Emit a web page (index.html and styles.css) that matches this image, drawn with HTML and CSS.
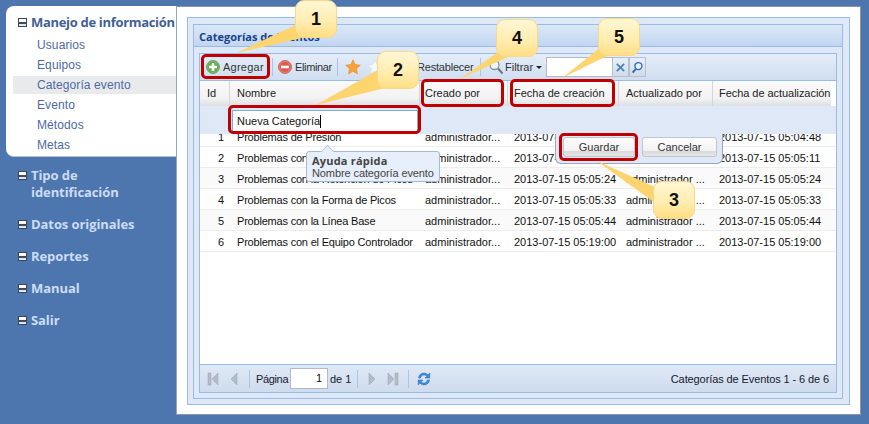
FILE: index.html
```html
<!DOCTYPE html>
<html lang="es">
<head>
<meta charset="utf-8">
<title>Categorías de Eventos</title>
<link rel="stylesheet" href="styles.css">
</head>
<body>
<div class="page">
  <nav class="sidebar">
    <div class="nav-open">
      <div class="nav-head"><span class="minus"></span><span>Manejo de información</span></div>
      <ul class="nav-list">
        <li>Usuarios</li>
        <li>Equipos</li>
        <li class="selected">Categoría evento</li>
        <li>Evento</li>
        <li>Métodos</li>
        <li>Metas</li>
      </ul>
    </div>
    <div class="nav-closed">
      <div class="nav-item two"><span class="minus"></span><span>Tipo de<br>identificación</span></div>
      <div class="nav-item"><span class="minus"></span><span>Datos originales</span></div>
      <div class="nav-item"><span class="minus"></span><span>Reportes</span></div>
      <div class="nav-item"><span class="minus"></span><span>Manual</span></div>
      <div class="nav-item"><span class="minus"></span><span>Salir</span></div>
    </div>
  </nav>
  <main class="content">
    <div class="frame">
      <section class="panel">
        <header class="panel-title">Categorías de Eventos</header>
        <div class="panel-body">
          <div class="grid">
            <div class="toolbar">
              <span class="tbtn add">
                <svg class="ico" viewBox="0 0 14 14"><circle cx="7" cy="7" r="6.5" fill="#6cbb5a" stroke="#7d9d78"/><circle cx="7" cy="7" r="5" fill="#5cb04a"/><path d="M5.7 3h2.6v2.7H11v2.6H8.300V11H5.700V8.300H3V5.700h2.700z" fill="#fff"/></svg>
                <span>Agregar</span>
              </span>
              <span class="sep"></span>
              <span class="tbtn del">
                <svg class="ico" viewBox="0 0 14 14"><circle cx="7" cy="7" r="6.500" fill="#ee7b70" stroke="#b86d68"/><circle cx="7" cy="7" r="5" fill="#e2574c"/><rect x="3" y="5.700" width="8" height="2.600" fill="#fff"/></svg>
                <span>Eliminar</span>
              </span>
              <span class="sep"></span>
              <svg class="star" viewBox="0 0 16 16"><path d="M8 .8l2.200 4.800 5.100.6-3.800 3.500 1 5.200L8 12.300l-4.500 2.600 1-5.200L.7 6.200l5.100-.6z" fill="#f9a13a" stroke="#e58a2a" stroke-width=".6"/></svg>
              <svg class="star two" viewBox="0 0 16 16"><path d="M8 .8l2.200 4.800 5.100.6-3.800 3.500 1 5.200L8 12.300l-4.500 2.600 1-5.200L.7 6.200l5.100-.6z" fill="#f7f8fb" stroke="#d5d9e0" stroke-width=".6"/></svg>
              <span class="reset">Restablecer</span>
              <span class="sep"></span>
              <svg class="lens" viewBox="0 0 16 16"><circle cx="6.500" cy="6" r="4.500" fill="#eef4fb" stroke="#8a94a2" stroke-width="1.300"/><path d="M10 9.500l4.500 5" stroke="#6d7682" stroke-width="2"/></svg>
              <span class="filter">Filtrar</span>
              <span class="caret"></span>
              <span class="search">
                <span class="search-input"></span>
                <span class="sbtn"><svg viewBox="0 0 12 12" width="11" height="11"><path d="M2 2l8 8M10 2l-8 8" stroke="#4d83b8" stroke-width="2"/></svg></span>
                <span class="sbtn"><svg viewBox="0 0 14 14" width="13" height="13"><circle cx="8" cy="5.500" r="3.800" fill="#e4f0fa" stroke="#2f6fb0" stroke-width="1.500"/><path d="M5.300 8.500L1.800 12.500" stroke="#2f6fb0" stroke-width="2.200"/></svg></span>
              </span>
            </div>
            <div class="cols">
              <div class="col c-id">Id</div>
              <div class="col c-name">Nombre</div>
              <div class="col c-by">Creado por</div>
              <div class="col c-date">Fecha de creación</div>
              <div class="col c-up">Actualizado por</div>
              <div class="col c-last">Fecha de actualización</div>
            </div>
            <div class="rows">
              <div class="row"><div class="c-id num">1</div><div class="c-name">Problemas de Presión</div><div class="c-by">administrador...</div><div class="c-date">2013-07-15 05:04:48</div><div class="c-up">administrador ...</div><div class="c-last">2013-07-15 05:04:48</div></div>
              <div class="row"><div class="c-id num">2</div><div class="c-name">Problemas con la Sensibilidad</div><div class="c-by">administrador...</div><div class="c-date">2013-07-15 05:05:11</div><div class="c-up">administrador ...</div><div class="c-last">2013-07-15 05:05:11</div></div>
              <div class="row alt"><div class="c-id num">3</div><div class="c-name">Problemas con la Retención de Picos</div><div class="c-by">administrador...</div><div class="c-date">2013-07-15 05:05:24</div><div class="c-up">administrador ...</div><div class="c-last">2013-07-15 05:05:24</div></div>
              <div class="row"><div class="c-id num">4</div><div class="c-name">Problemas con la Forma de Picos</div><div class="c-by">administrador...</div><div class="c-date">2013-07-15 05:05:33</div><div class="c-up">administrador ...</div><div class="c-last">2013-07-15 05:05:33</div></div>
              <div class="row alt"><div class="c-id num">5</div><div class="c-name">Problemas con la Línea Base</div><div class="c-by">administrador...</div><div class="c-date">2013-07-15 05:05:44</div><div class="c-up">administrador ...</div><div class="c-last">2013-07-15 05:05:44</div></div>
              <div class="row"><div class="c-id num">6</div><div class="c-name">Problemas con el Equipo Controlador</div><div class="c-by">administrador...</div><div class="c-date">2013-07-15 05:19:00</div><div class="c-up">administrador ...</div><div class="c-last">2013-07-15 05:19:00</div></div>
            </div>
            <div class="pager">
              <svg class="pg" viewBox="0 0 12 14"><rect x="1" y="1" width="3" height="12" fill="#b4bcc6" stroke="#99a2ad" stroke-width=".5"/><path d="M11 1v12L5 7z" fill="#b4bcc6" stroke="#99a2ad" stroke-width=".5"/></svg>
              <svg class="pg" viewBox="0 0 12 14"><path d="M9 1v12L3 7z" fill="#b4bcc6" stroke="#99a2ad" stroke-width=".5"/></svg>
              <span class="sep"></span>
              <span class="pg-label">Página</span>
              <span class="pg-input">1</span>
              <span class="pg-of">de 1</span>
              <span class="sep"></span>
              <svg class="pg next" viewBox="0 0 12 14"><path d="M3 1v12L9 7z" fill="#b4bcc6" stroke="#99a2ad" stroke-width=".5"/></svg>
              <svg class="pg" viewBox="0 0 12 14"><path d="M1 1v12L7 7z" fill="#b4bcc6" stroke="#99a2ad" stroke-width=".5"/><rect x="8" y="1" width="3" height="12" fill="#b4bcc6" stroke="#99a2ad" stroke-width=".5"/></svg>
              <span class="sep"></span>
              <svg class="refresh" viewBox="0 0 16 16"><path d="M2.500 7A5.500 5.500 0 0 1 12 3.800L13.800 2v5H9l1.800-1.800A3.600 3.600 0 0 0 4.500 7z" fill="#3d8fe0" stroke="#1f66b5" stroke-width=".5"/><path d="M13.500 9A5.500 5.500 0 0 1 4 12.200L2.200 14V9H7l-1.800 1.800A3.600 3.600 0 0 0 11.500 9z" fill="#3d8fe0" stroke="#1f66b5" stroke-width=".5"/></svg>
              <span class="pg-info">Categorías de Eventos 1 - 6 de 6</span>
            </div>
            <div class="editor"><div class="edit-field">Nueva Categoría<span class="cursor"></span></div></div>
            <div class="edit-actions"><span class="btn">Guardar</span><span class="btn">Cancelar</span></div>
            <div class="tip">
              <strong>Ayuda rápida</strong>
              <span>Nombre categoría evento</span>
            </div>
          </div>
        </div>
      </section>
    </div>
  </main>
</div>
<svg class="tails" viewBox="0 0 869 424" aria-hidden="true">
  <path d="M236 53L298 24L306 37z"/>
  <path d="M316 105L378 70L385 88z"/>
  <path d="M460 79L501 50L510 56z"/>
  <path d="M562 78L601 47L611 54z"/>
  <path d="M597 161L655 187L655 203z"/>
</svg>
<div class="mark m1"></div>
<div class="mark m2"></div>
<div class="mark m3"></div>
<div class="mark m4"></div>
<div class="mark m5"></div>
<div class="bubble b1">1</div>
<div class="bubble b2">2</div>
<div class="bubble b3">3</div>
<div class="bubble b4">4</div>
<div class="bubble b5">5</div>
</body>
</html>
```
FILE: styles.css
```css
* { box-sizing: border-box; }
html, body { margin: 0; padding: 0; }
body {
  width: 869px;
  height: 424px;
  overflow: hidden;
  position: relative;
  background: #4e76ae;
  font-family: "Liberation Sans", Arial, sans-serif;
  font-size: 11px;
  color: #1c1c1c;
}
.page { display: flex; padding: 6px 8px 9px 6px; height: 424px; }
.sidebar { width: 170px; flex: none; }
.nav-open {
  height: 151px;
  background: #fff;
  border-radius: 8px 0 0 8px;
  padding: 7px 0 0 7px;
  border-bottom: 1px solid #b5c3d8;
}
.nav-head, .nav-item {
  display: flex;
  gap: 4px;
  font-family: "Open Sans", sans-serif;
  font-weight: 700;
  font-size: 13px;
  line-height: 18px;
  letter-spacing: -.08px;
  white-space: nowrap;
}
.nav-head { color: #3f5f95; padding-left: 5px; letter-spacing: -.32px; }
.minus {
  flex: none;
  width: 9px;
  height: 9px;
  margin-top: 5px;
  background: linear-gradient(#fff 0 3px, #3f4a5c 3px 5px, #dfe6ef 5px);
  border: 1px solid #3c4757;
}
.nav-list { list-style: none; margin: 4px 0 0; padding: 0; }
.nav-list li {
  height: 20px;
  line-height: 20px;
  padding: 0 0 0 24px;
  font-size: 12px;
  letter-spacing: .1px;
  color: #4d6aa6;
}
.nav-list .selected { background: linear-gradient(transparent 1px, #e9eaec 1px 19px, transparent 19px); }
.nav-closed { padding: 10px 0 0 12px; }
.nav-item { color: #cbdcf5; height: 32px; }
.nav-item.two { height: 48px; line-height: 17px; }
.nav-item.two .minus { margin-top: 4px; }

.content {
  flex: 1;
  background: #fff;
  border: 1px solid #8b97a8;
  border-left-color: #9aa3ae;
  padding: 10px 10px 9px 10px;
}
.frame {
  height: 100%;
  background: #dfe8f6;
  border: 1px solid #99bbe8;
  padding: 6px 6px 5px 5px;
}
.panel {
  height: 100%;
  border: 1px solid #99bbe8;
  background: #dfe8f6;
  display: flex;
  flex-direction: column;
}
.panel-title {
  height: 22px;
  flex: none;
  padding: 4px 0 0 5px;
  line-height: 15px;
  font-family: "Open Sans", sans-serif;
  font-weight: 700;
  font-size: 11px;
  color: #15428b;
  background: linear-gradient(#dae7f6, #cddef3 60%, #c2d6f0);
  border-bottom: 1px solid #99bbe8;
}
.panel-body { flex: 1; padding: 6px 5px 5px 5px; min-height: 0; }
.grid {
  height: 100%;
  position: relative;
  background: #fff;
  border: 1px solid #99bbe8;
  display: flex;
  flex-direction: column;
}
.toolbar {
  height: 27px;
  flex: none;
  display: flex;
  align-items: center;
  padding-left: 6px;
  background: linear-gradient(#e4edf9, #d0def0);
  border-bottom: 1px solid #99bbe8;
  color: #333;
}
.tbtn { display: flex; align-items: center; gap: 3px; flex: none; }
.tbtn.add { letter-spacing: .25px; width: 58px; }
.tbtn.del { letter-spacing: -.35px; width: 54px; }
.ico { width: 14px; height: 14px; flex: none; }
.sep { width: 1px; height: 18px; background: #a9c4e8; flex: none; }
.add + .sep { margin: 0 5px 0 8px; }
.del + .sep { margin: 0 7px 0 5px; }
.star { width: 16px; height: 16px; flex: none; }
.star.two { margin-left: 6px; }
.reset { margin-left: 34px; letter-spacing: -.2px; width: 56px; flex: none; }
.reset + .sep { margin: 0 7px; }
.lens { width: 16px; height: 16px; flex: none; }
.filter { margin-left: 1px; width: 29px; flex: none; }
.caret {
  margin: 1px 4px 0 2px;
  border: 3px solid transparent;
  border-top-color: #222;
  border-bottom-width: 0;
}
.search { display: flex; height: 20px; }
.search-input { width: 66px; background: #fff; border: 1px solid #b5b8c8; border-right: 0; }
.sbtn {
  width: 17px;
  display: flex;
  align-items: center;
  justify-content: center;
  border: 1px solid #b5bfd0;
  background: linear-gradient(#e8eff9, #cfdcec);
}
.cols {
  height: 25px;
  flex: none;
  display: flex;
  background: linear-gradient(#fafafa, #f2f2f2 70%, #dcdfe4);
  margin-right: 5px;
}
.col {
  line-height: 25px;
  color: #222;
  border-right: 1px solid #d3d6db;
  white-space: nowrap;
  overflow: hidden;
}
.col.c-last { border-right: 0; letter-spacing: -.05px; }
.c-id { width: 30px; padding-left: 7px; flex: none; }
.c-name { width: 190px; padding-left: 7px; flex: none; }
.c-by { width: 88px; padding-left: 5px; flex: none; }
.c-date { width: 111px; padding-left: 6px; flex: none; }
.c-up { width: 94px; padding-left: 7px; flex: none; }
.c-last { width: 118px; padding-left: 6px; flex: none; }
.rows { flex: 1; padding-top: 20px; min-height: 0; }
.row {
  height: 21px;
  display: flex;
  line-height: 22px;
  border-bottom: 1px solid #ededed;
  color: #111;
  white-space: nowrap;
}
.row .c-name { letter-spacing: -.2px; }
.row.alt { background: #fafafa; }
.row .num { padding: 0 6px 0 0; text-align: right; letter-spacing: 0; }
.pager {
  height: 28px;
  flex: none;
  display: flex;
  align-items: center;
  padding-left: 7px;
  background: linear-gradient(#dfe8f6, #cfdcee);
  border-top: 1px solid #99bbe8;
  color: #15202e;
  line-height: 15px;
  white-space: nowrap;
}
.pg { width: 12px; height: 14px; margin-right: 7px; flex: none; }
.pg + .pg { margin-left: 2px; }
.pg.next { margin-left: 2px; }
.pager .sep { margin: 0 6px 0 2px; }
.pg-label { width: 34px; flex: none; letter-spacing: -.35px; padding-top: 1px; }
.pg-input {
  width: 38px;
  height: 21px;
  line-height: 19px;
  background: #fff;
  border: 1px solid #b5b8c8;
  text-align: right;
  padding-right: 5px;
  color: #111;
  flex: none;
}
.pg-of { margin: 0 4px 0 2px; width: 21px; flex: none; padding-top: 1px; }
.refresh { width: 16px; height: 16px; margin-left: 1px; flex: none; }
.pg-info { margin-left: auto; margin-right: 7px; letter-spacing: -.1px; padding-top: 1px; }
.editor {
  position: absolute;
  left: 0;
  right: 0;
  top: 52px;
  height: 28px;
  background: #dfe8f6;
  padding: 4px 0 0 32px;
}
.edit-field {
  width: 186px;
  height: 22px;
  line-height: 20px;
  padding-left: 4px;
  background: #fff;
  border: 1px solid #7eadd9;
  color: #111;
}
.cursor { display: inline-block; width: 1px; height: 13px; background: #000; vertical-align: -3px; }
.edit-actions {
  position: absolute;
  left: 355px;
  top: 80px;
  width: 168px;
  height: 30px;
  display: flex;
  gap: 7px;
  padding: 3px 0 0 7px;
  background: #dfe8f6;
  border: 1px solid #99a8bd;
  border-top: 0;
  border-radius: 0 0 6px 6px;
}
.btn {
  height: 20px;
  width: 72px;
  line-height: 18px;
  text-align: center;
  color: #333;
  border: 1px solid #c0c6ce;
  border-radius: 3px;
  background: linear-gradient(#fdfdfd, #f2f2f2 70%, #d8d8d8 70%, #e6e6e6);
}
.btn + .btn { width: 75px; }
.tip {
  position: absolute;
  left: 106px;
  top: 97px;
  width: 134px;
  height: 31px;
  display: flex;
  flex-direction: column;
  padding: 2px 0 0 5px;
  line-height: 13px;
  background: #e6effa;
  border: 1px solid #a3bad9;
  border-radius: 3px;
  color: #444;
}
.tip strong { font-family: "Open Sans", sans-serif; font-size: 11px; color: #444; letter-spacing: .2px; }
.tip span { letter-spacing: -.1px; }
.tip::before {
  content: "";
  position: absolute;
  left: 14px;
  top: -7px;
  width: 12px;
  height: 12px;
  background: #e6effa;
  border: 1px solid #a3bad9;
  border-right: 0;
  border-bottom: 0;
  transform: rotate(45deg) scale(.7);
}
.tails { position: absolute; left: 0; top: 0; width: 869px; height: 424px; pointer-events: none; }
.tails path { fill: #fdd46d; }
.mark {
  position: absolute;
  border: 3px solid #c00000;
  border-radius: 5px;
}
.m1 { left: 201px; top: 54px; width: 69px; height: 25px; }
.m2 { left: 228px; top: 105px; width: 193px; height: 29px; }
.m3 { left: 559px; top: 133px; width: 79px; height: 28px; }
.m4 { left: 421px; top: 79px; width: 83px; height: 28px; }
.m5 { left: 510px; top: 79px; width: 105px; height: 28px; }
.bubble {
  position: absolute;
  width: 42px;
  height: 38px;
  display: flex;
  align-items: center;
  justify-content: center;
  font-size: 18px;
  font-weight: 700;
  color: #111;
  border: 1px solid #f8d98a;
  border-radius: 9px;
  background: linear-gradient(#fff7d5, #ffedb0 55%, #ffde85);
}
.b1 { left: 295px; top: 0; }
.b2 { left: 377px; top: 51px; }
.b3 { left: 653px; top: 181px; }
.b4 { left: 496px; top: 19px; }
.b5 { left: 598px; top: 18px; }
```
